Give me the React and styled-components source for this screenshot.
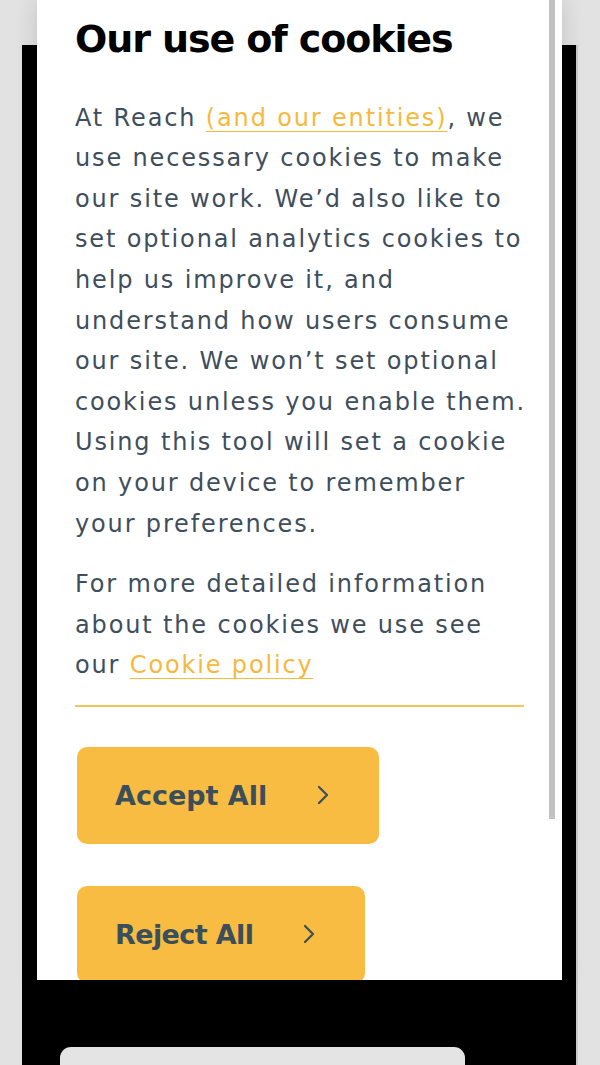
import React from "react";
import styled, { createGlobalStyle } from "styled-components";

const Global = createGlobalStyle`
  html, body {
    margin: 0;
    padding: 0;
    height: 1065px;
    overflow: hidden;
    background: #e2e2e2;
  }
  #root { position: relative; height: 1065px; display: flow-root; }
`;

const Frame = styled.div`
  margin: 45px 22px 0;
  height: 1020px;
  background: #000;
  padding: 1002px 0 0 38px;
  box-sizing: border-box;
  border-right: 2px solid #c9c9c9;
`;

const GhostCard = styled.div`
  width: 405px;
  height: 60px;
  background: #e4e4e4;
  border-radius: 11px 11px 0 0;
`;

const Dialog = styled.div`
  position: absolute;
  left: 37px;
  top: 0;
  width: 525px;
  height: 980px;
  background: #fff;
  overflow: hidden;
  box-shadow: 0 0 22px rgba(0, 0, 0, 0.14);
  padding: 17px 38px 0;
  box-sizing: border-box;
`;

const Thumb = styled.div`
  position: absolute;
  top: 0;
  right: 7px;
  width: 6px;
  height: 819px;
  background: #c1c1c1;
`;

const Title = styled.h1`
  margin: 0 0 35px;
  font-family: "DejaVu Sans", sans-serif;
  font-weight: 700;
  font-size: 38px;
  line-height: 1.2;
  letter-spacing: -1.1px;
  color: #000;
`;

const Para = styled.p`
  margin: 0 0 ${(p) => p.$mb || 0}px;
  font-family: "DejaVu Sans", sans-serif;
  font-size: 24px;
  line-height: 40.6px;
  letter-spacing: 1.85px;
  color: #3e4e5c;
  white-space: nowrap;
`;

const Link = styled.a`
  color: #f6b93b;
  text-decoration: underline;
  text-decoration-thickness: 1px;
  text-underline-offset: 5px;
  cursor: pointer;
`;

const Divider = styled.hr`
  margin: 19px 0 40px;
  border: 0;
  height: 2px;
  background: #f2c55c;
`;

const Button = styled.button`
  display: flex;
  align-items: center;
  gap: 50px;
  height: 97px;
  margin: 0 0 ${(p) => p.$mb || 0}px 2px;
  padding: 0 50px 0 38px;
  border: 0;
  border-radius: 10px;
  background: #f7bc41;
  color: #3b4e5b;
  font-family: "DejaVu Sans", sans-serif;
  font-weight: 700;
  font-size: 27px;
  letter-spacing: ${(p) => p.$ls || 0}px;
  cursor: pointer;
`;

const Chevron = () => (
  <svg width="12" height="20" viewBox="0 0 12 20" fill="none">
    <polyline
      points="2,2 10,10 2,18"
      stroke="#3b4e5b"
      strokeWidth="2.2"
      strokeLinecap="round"
      strokeLinejoin="round"
    />
  </svg>
);

export default function App() {
  return (
    <>
      <Global />
      <Frame>
        <GhostCard />
      </Frame>
      <Dialog>
        <Thumb />
        <Title>Our use of cookies</Title>
        <Para $mb={20}>
          At Reach <Link>(and our entities)</Link>, we
          <br />
          use necessary cookies to make
          <br />
          our site work. We’d also like to
          <br />
          set optional analytics cookies to
          <br />
          help us improve it, and
          <br />
          understand how users consume
          <br />
          our site. We won’t set optional
          <br />
          cookies unless you enable them.
          <br />
          Using this tool will set a cookie
          <br />
          on your device to remember
          <br />
          your preferences.
        </Para>
        <Para>
          For more detailed information
          <br />
          about the cookies we use see
          <br />
          our <Link>Cookie policy</Link>
        </Para>
        <Divider />
        <Button $mb={42}>
          Accept All <Chevron />
        </Button>
        <Button $ls={-0.6}>
          Reject All <Chevron />
        </Button>
      </Dialog>
    </>
  );
}
